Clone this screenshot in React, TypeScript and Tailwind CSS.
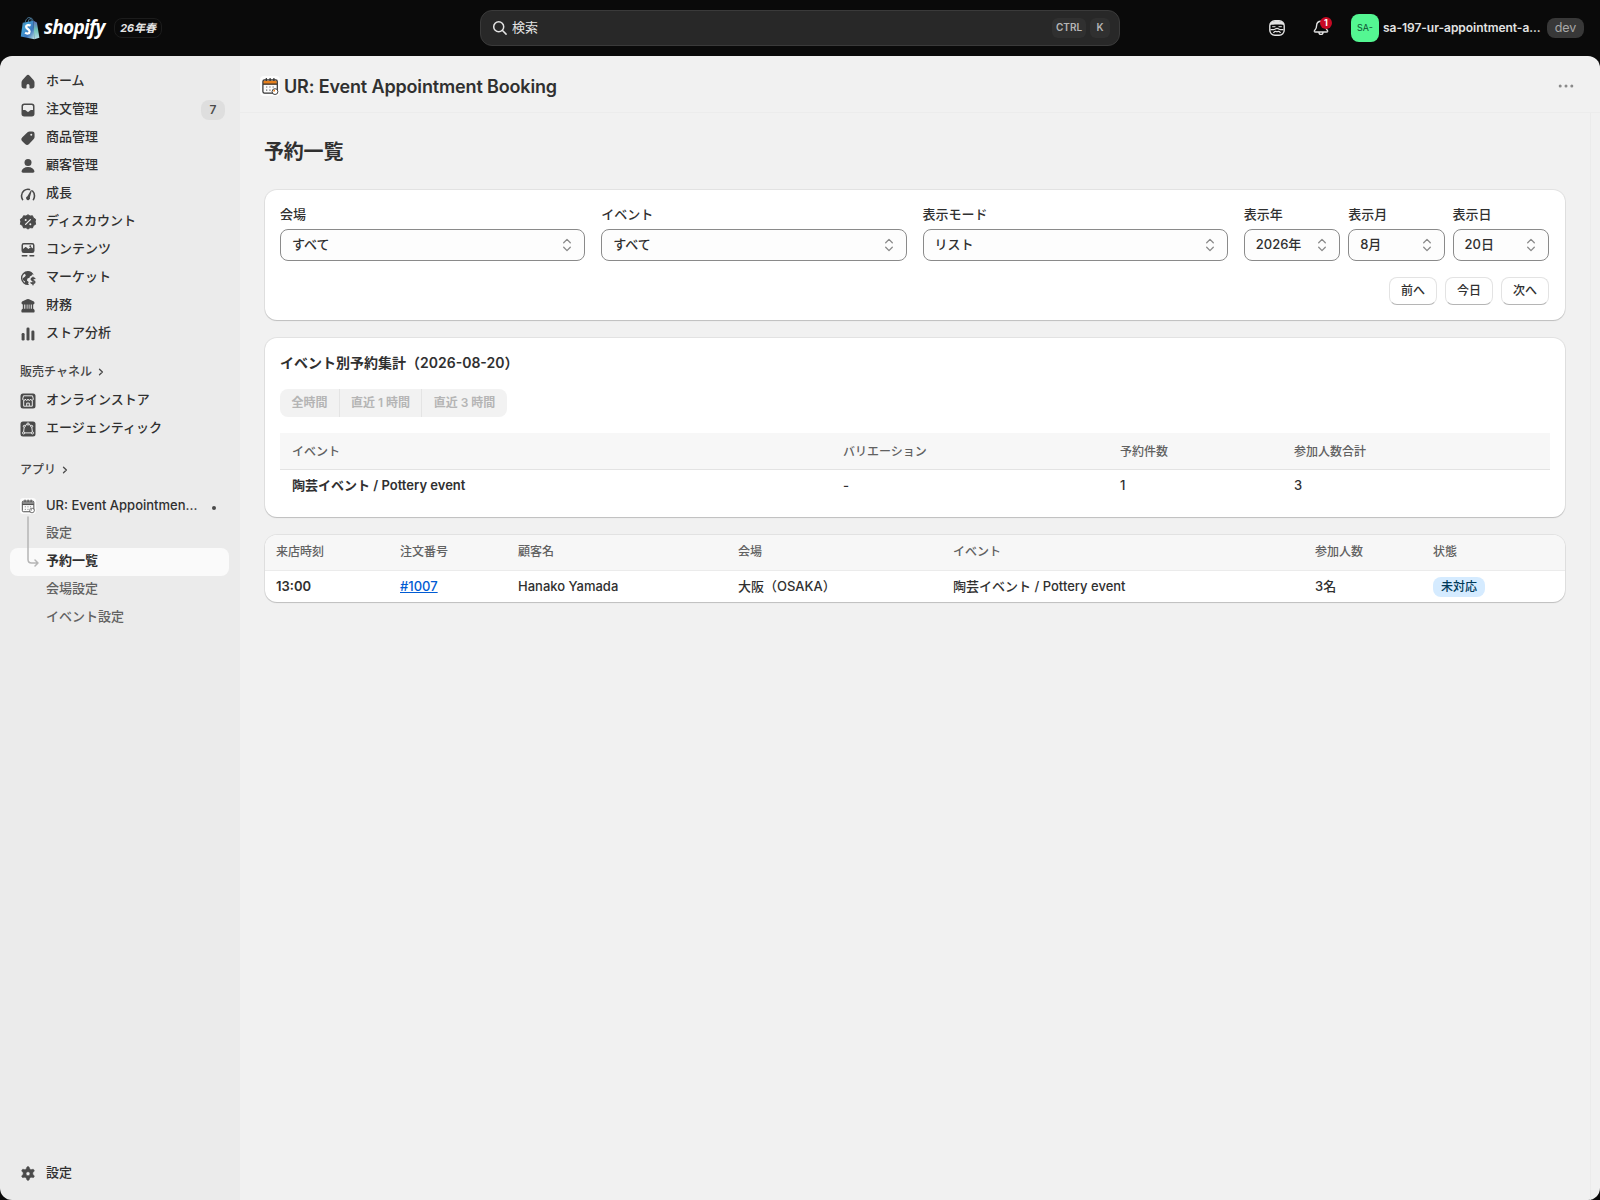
import React from "react";

const ICON = "block h-5 w-5 shrink-0 text-[#4a4a4a]";

function Svg({ children, className = ICON }: { children: React.ReactNode; className?: string }) {
  return (
    <svg viewBox="0 0 20 20" className={className} fill="currentColor">
      {children}
    </svg>
  );
}

const icons: Record<string, React.ReactNode> = {
  home: (
    <path d="M8.344 3.692a2.25 2.25 0 0 1 3.312 0l3.854 4.19a3.75 3.75 0 0 1 .99 2.538v3.33a2.75 2.75 0 0 1-2.75 2.75h-1.5a.75.75 0 0 1-.75-.75v-2.25a1.5 1.5 0 0 0-3 0v2.25a.75.75 0 0 1-.75.75h-1.5a2.75 2.75 0 0 1-2.75-2.75v-3.33c0-.94.353-1.846.99-2.539l3.854-4.189Z" />
  ),
  orders: (
    <path
      fillRule="evenodd"
      d="M6.25 3.5a2.75 2.75 0 0 0-2.75 2.75v7.5a2.75 2.75 0 0 0 2.75 2.75h7.5a2.75 2.75 0 0 0 2.75-2.75v-7.5a2.75 2.75 0 0 0-2.75-2.75h-7.5Zm-1.25 3c0-.83.67-1.5 1.5-1.5h7c.83 0 1.5.67 1.5 1.5v3.5h-1.9c-.54 0-1.06.23-1.42.64l-.7.78a.9.9 0 0 1-.66.28h-.64a.9.9 0 0 1-.66-.28l-.7-.78a1.9 1.9 0 0 0-1.42-.64h-1.9v-3.5Z"
    />
  ),
  tag: (
    <path
      fillRule="evenodd"
      d="M11.6 3.5a3 3 0 0 0-2.06.82l-5.2 4.94a2.75 2.75 0 0 0-.05 3.94l2.83 2.83a2.75 2.75 0 0 0 3.94-.05l4.7-4.95a3 3 0 0 0 .82-2.06v-3.22a2.25 2.25 0 0 0-2.25-2.25h-2.73Zm1.65 4.25a1 1 0 1 0 0-2 1 1 0 0 0 0 2Z"
    />
  ),
  person: (
    <>
      <circle cx="10" cy="6.5" r="3.5" />
      <path d="M3.6 15.1c.5-2.3 2.9-4 6.4-4s5.900 1.700 6.400 4c.2.900-.5 1.650-1.400 1.650h-10c-.900 0-1.600-.750-1.400-1.650Z" />
    </>
  ),
  growth: (
    <>
      <path d="M4.6 15.600a7 7 0 0 1-1.100-3.900 6.500 6.500 0 0 1 8-6.250M14.500 7a6.500 6.500 0 0 1 2 4.700c0 1.400-.4 2.800-1.100 3.900" fill="none" stroke="currentColor" strokeWidth="1.600" strokeLinecap="round" />
      <path d="m12.900 6.200-3.500 6a2 2 0 1 0 2.500 1.100l1.900-6.700c.200-.6-.6-.9-.9-.4Z" />
    </>
  ),
  discount: (
    <>
      <path d="M10 2.700l2 1.400 2.500-.3.900 2.300 2.200 1.200-.5 2.500.5 2.500-2.200 1.200-.9 2.400-2.500-.3-2 1.500-2-1.500-2.500.3-.9-2.400-2.200-1.200.5-2.500-.5-2.500 2.200-1.200.9-2.300 2.500.3Z" stroke="currentColor" strokeLinejoin="round" />
      <path d="m7.600 12.400 4.800-4.800" stroke="#ebebeb" strokeWidth="1.300" strokeLinecap="round" />
      <circle cx="7.700" cy="7.900" r="1" fill="#ebebeb" />
      <circle cx="12.300" cy="12.200" r="1" fill="#ebebeb" />
    </>
  ),
  content: (
    <>
      <path
        fillRule="evenodd"
        d="M5.750 3a2.250 2.250 0 0 0-2.250 2.250v5.500a2.250 2.250 0 0 0 2.250 2.250h8.500a2.250 2.250 0 0 0 2.250-2.250v-5.500a2.250 2.250 0 0 0-2.250-2.250h-8.500Zm-.75 2.500c0-.6.400-1 1-1h8c.6 0 1 .4 1 1v3l-1.200-.9c-.5-.4-1.100-.4-1.600 0l-1.700 1.500-2-1.700c-.5-.4-1.100-.4-1.600 0l-1.900 1.500v-2.400Z"
      />
      <circle cx="12.300" cy="6.200" r=".9" />
      <path d="M4.300 15.800h4.500M12 15.800h3.700" stroke="currentColor" strokeWidth="1.500" strokeLinecap="round" />
    </>
  ),
  markets: (
    <>
      <path fillRule="evenodd" d="M10 3a7 7 0 1 0 1 13.920l-.9-1.500.6-1.300-1.800-1.700.6-1.900 2-.8.400-1.200 1.800-1 .9-1.300 1.200.6a7 7 0 0 0-5.800-3.820Zm-3.700 2.700 1.600 1.200-.8 1.700-2.300 1.600.3 2 2 1.300-.2 1.200a5.600 5.600 0 0 1-.6-9Z" />
      <path d="M16.800 10.600c-.5-.7-3.500-1-3.600.7 0 1.800 3.700.9 3.700 2.800 0 1.700-3.100 1.600-3.900.6M15 9.200v7.500" fill="none" stroke="currentColor" strokeWidth="1.400" strokeLinecap="round" />
    </>
  ),
  finance: (
    <path d="M8.900 3.200a2.500 2.500 0 0 1 2.200 0l4.300 2.100c.7.300 1.100 1 1.100 1.700 0 .8-.6 1.400-1.300 1.500v4.200c.8.200 1.400.9 1.400 1.800v1c0 .6-.4 1-1 1H4.400c-.6 0-1-.4-1-1v-1c0-.9.600-1.600 1.400-1.800V8.500C4.100 8.400 3.500 7.800 3.500 7c0-.7.4-1.400 1.100-1.700l4.300-2.100ZM6.200 8.500v4.200h1.100V8.500Zm2.500 0v4.200h.8V8.500Zm2 0v4.200h.8V8.500Zm2.100 0v4.200h1V8.500Z" fillRule="evenodd" />
  ),
  analytics: (
    <>
      <rect x="3.600" y="9" width="3" height="7.500" rx="1.300" />
      <rect x="8.500" y="3.500" width="3" height="13" rx="1.300" />
      <rect x="13.400" y="6.500" width="3" height="10" rx="1.300" />
    </>
  ),
  gear: (
    <path
      fillRule="evenodd"
      stroke="currentColor"
      strokeWidth=".5"
      d="M8.700 3.400c.2-.5.700-.9 1.300-.9s1.100.4 1.300.9l.5 1.600 1.200.7 1.600-.4c.6-.1 1.200.1 1.500.6s.2 1.200-.2 1.600l-1.100 1.200v1.500l1.100 1.200c.4.400.5 1.100.2 1.600s-.9.700-1.500.6l-1.600-.4-1.200.7-.5 1.600c-.2.5-.7.900-1.300.9s-1.100-.4-1.300-.9l-.5-1.600-1.200-.7-1.600.4c-.6.1-1.200-.1-1.500-.6s-.2-1.200.2-1.600l1.100-1.200V8.700L4.100 7.500c-.4-.4-.5-1.100-.2-1.600s.9-.7 1.500-.6l1.600.4L8.200 5Zm1.300 8.300a1.950 1.950 0 1 0 0-3.900 1.950 1.950 0 0 0 0 3.900Z"
    />
  ),
};

const navItems = [
  { icon: "home", label: "ホーム" },
  { icon: "orders", label: "注文管理", count: "7" },
  { icon: "tag", label: "商品管理" },
  { icon: "person", label: "顧客管理" },
  { icon: "growth", label: "成長" },
  { icon: "discount", label: "ディスカウント" },
  { icon: "content", label: "コンテンツ" },
  { icon: "markets", label: "マーケット" },
  { icon: "finance", label: "財務" },
  { icon: "analytics", label: "ストア分析" },
];

function NavRow({ icon, label, count }: { icon: React.ReactNode; label: string; count?: string }) {
  return (
    <div className="flex h-7 items-center pl-2 pr-1">
      {icon}
      <span className="ml-2 flex-1 -translate-y-px whitespace-nowrap">{label}</span>
      {count && (
        <span className="flex h-5 w-6 items-center justify-center rounded-lg bg-[#dedede] text-xs font-semibold text-[#4a4a4a]">
          {count}
        </span>
      )}
    </div>
  );
}

function SectionTitle({ label }: { label: string }) {
  return (
    <div className="flex h-7 items-center pl-[10px] text-xs text-[#454545]">
      <span>{label}</span>
      <svg viewBox="0 0 8 8" className="ml-[5px] h-2 w-2" fill="none" stroke="#4a4a4a" strokeWidth="1.300" strokeLinecap="round" strokeLinejoin="round">
        <path d="M2.500 1.200 5.400 4 2.500 6.800" />
      </svg>
    </div>
  );
}

function CalendarIcon({ className, ink, band, dial }: { className: string; ink: string; band: string; dial: string }) {
  return (
    <svg viewBox="0 0 20 20" className={className}>
      <rect width="20" height="20" rx="4" fill="#fff" fillOpacity=".8" />
      <path d="M3.200 4.400h13.600v4H3.200Z" fill={band} />
      <rect x="2.900" y="3.800" width="14.400" height="13.400" rx="1.600" fill="none" stroke={ink} strokeWidth="1.200" />
      <path d="M3 8.200h14.200M6.300 2v3M10.100 2v3M13.900 2v3" stroke={ink} strokeWidth="1.200" />
      <path d="M6 11h1.300M9.300 11h1.300M12.500 11h1.300M6 14.200h1.300M9.300 14.200h1.300" stroke={ink} strokeWidth="1.200" opacity=".7" />
      <circle cx="15" cy="15.600" r="2.900" fill="#fff" stroke={ink} strokeWidth=".9" />
      <path d="M15 15.600v-2a2 2 0 0 0-1.900 2Z" fill={dial} />
    </svg>
  );
}

function TopBar() {
  return (
    <header className="flex h-14 items-center bg-[#0a0a0a] text-[#e3e3e3]">
      <div className="flex w-[480px] items-center pl-5">
        <svg viewBox="0 0 20 24" className="h-6 w-5">
          <defs>
            <linearGradient id="bag" x1="0" y1="0" x2="1" y2="1">
              <stop offset="0" stopColor="#4a6c94" />
              <stop offset=".3" stopColor="#43a0d4" />
              <stop offset=".65" stopColor="#3a74bd" />
              <stop offset="1" stopColor="#bfe8e6" />
            </linearGradient>
            <linearGradient id="side" x1="0" y1="0" x2="0" y2="1">
              <stop offset="0" stopColor="#5b6bb8" />
              <stop offset=".5" stopColor="#6fc3b8" />
              <stop offset="1" stopColor="#b9dfee" />
            </linearGradient>
          </defs>
          <path d="M5.200 6.500C5.800 3 8 1.200 9.600 1.600c1.400.4 1.700 2.300 1.700 3.900M8.200 6C8.800 3 10.500 1.500 11.700 2.300c.8.500 1.200 1.700 1.300 2.900" fill="none" stroke="#4e7fa3" strokeWidth="1" />
          <path d="M2.700 6.700 13.600 4.700 14.300 23.200.8 20.600Z" fill="url(#bag)" />
          <path d="m13.600 4.700 3.300 1.700 2.500 15.400-5.100 1.400Z" fill="url(#side)" />
          <path d="M10.600 9.600c-1.500-.9-4.500-.8-4.400 1.400.1 1.900 3.400 2.200 3.400 4.500 0 2.200-2.500 2.700-4.500 1.200" fill="none" stroke="#fff" strokeWidth="2.300" />
        </svg>
        <span className="ml-1 w-[70px] origin-left -translate-y-px font-['Open_Sans',sans-serif] text-[19px] font-bold italic leading-6 tracking-[-0.7px] text-white">shopify</span>
        <span className="flex h-5 w-12 items-center justify-center rounded-lg border border-[#1c1c1c] text-[11px] font-bold italic tracking-[-0.1px]">26年春</span>
      </div>
      <div className="flex h-9 w-[640px] items-center rounded-xl border border-[#3a3a3a] bg-[#282828] pl-[11px] pr-[9px]">
        <svg viewBox="0 0 16 16" className="h-4 w-4" fill="none" stroke="#e3e3e3" strokeWidth="1.500" strokeLinecap="round">
          <circle cx="6.700" cy="6.700" r="5" />
          <path d="m10.500 10.500 3.600 3.600" />
        </svg>
        <span className="ml-1 flex-1 text-[13px]">検索</span>
        <span className="flex h-5 w-[34px] items-center justify-center rounded-md bg-[#303030] pb-px text-[10px] font-semibold text-[#b5b5b5]">CTRL</span>
        <span className="ml-1 flex h-5 w-5 items-center justify-center rounded-md bg-[#303030] pb-px text-[10px] font-semibold text-[#b5b5b5]">K</span>
      </div>
      <div className="flex flex-1 items-center justify-end pr-4">
        <svg viewBox="0 0 16 16" className="h-4 w-4" fill="none" stroke="#e3e3e3">
          <rect x=".8" y=".8" width="14.400" height="14.400" rx="5" strokeWidth="1.400" />
          <path d="M1 5C1 2 3.500 1 8 1s7 1 7 4c-3-.8-11-.8-14 0Z" fill="#e3e3e3" stroke="none" />
          <path d="M1.500 9.700h3.100c1.400 0 1.900-1.400 3.400-1.400s2 1.400 3.400 1.400h3.100" strokeWidth="1.300" />
          <path d="M3.200 6.700h3.300M9.500 6.700h3.300" strokeWidth="1" />
          <path d="M4.500 13c.8-1.700 2-1.900 3.500-1.200 1.500-.7 2.700-.5 3.500 1.200" strokeWidth="1.200" />
        </svg>
        <div className="relative ml-[26px] h-5 w-5">
          <svg viewBox="0 0 20 20" className="h-5 w-5" fill="none" stroke="#e3e3e3" strokeWidth="1.400" strokeLinecap="round" strokeLinejoin="round">
            <path d="M10 3.200c-2.700 0-4.300 2-4.400 4.300-.1 2.200-.4 3-1.300 3.900-.8.800-1.200 1.200-1 1.900.2.600.7.700 1.300.7h10.800c.6 0 1.100-.1 1.300-.7.200-.7-.2-1.100-1-1.900-.9-.9-1.200-1.700-1.300-3.900C14.300 5.200 12.700 3.200 10 3.200ZM7.900 14.200c.1 1.300.9 2.200 2.100 2.200s2-.9 2.100-2.200" />
          </svg>
          <span className="absolute left-[9px] top-[-1px] flex h-3 w-3 items-center justify-center rounded-full bg-[#c70a24] text-[9px] font-bold text-white">1</span>
        </div>
        <span className="ml-5 flex h-7 w-7 items-center justify-center rounded-lg bg-[#54f792] text-[9px] font-normal text-[#0f5132]">SA-</span>
        <span className="ml-1 w-[157px] whitespace-nowrap text-xs font-semibold tracking-[-0.03px]">sa-197-ur-appointment-a...</span>
        <span className="ml-[7px] flex h-5 w-[37px] items-center justify-center rounded-lg bg-[#383838] text-[12.5px] font-normal text-[#a8a8a8]">dev</span>
      </div>
    </header>
  );
}

function Sidebar() {
  return (
    <nav className="flex w-60 shrink-0 flex-col bg-[#ebebeb] pb-3 pl-[10px] pr-[11px] pt-3 text-[13px] font-medium text-[#303030]">
      {navItems.map((n) => (
        <NavRow key={n.label} icon={<Svg>{icons[n.icon]}</Svg>} label={n.label} count={n.count} />
      ))}
      <div className="mt-[10px]">
        <div className="mb-px">
          <SectionTitle label="販売チャネル" />
        </div>
        <NavRow
          label="オンラインストア"
          icon={
            <Svg>
              <rect x="2.500" y="2.500" width="15" height="15" rx="2.500" />
              <path d="M5.500 4.800h9l.8 3.200c0 1.900-2.600 1.900-2.700 0 0 1.900-2.600 1.900-2.600 0 0 1.900-2.600 1.900-2.600 0-.1 1.900-2.700 1.900-2.700 0Zm.2 4.900v5.500h8.600V9.700M8.700 15v-2.900h2.600V15" fill="none" stroke="#ebebeb" strokeWidth="1" />
            </Svg>
          }
        />
        <NavRow
          label="エージェンティック"
          icon={
            <Svg>
              <rect x="2.500" y="2.500" width="15" height="15" rx="2.500" />
              <g fill="none" stroke="#ebebeb" strokeWidth="1">
                <path d="M9 5.400 6.900 6.700M11 5.400l2.100 1.300M6.200 8.300l-.6 4.500M13.800 8.300l.6 4.500M6.700 13.900h6.600" />
                <circle cx="10" cy="5" r="1.100" />
                <circle cx="6.300" cy="7.300" r="1" />
                <circle cx="13.700" cy="7.300" r="1" />
                <circle cx="5.600" cy="13.900" r="1.100" />
                <circle cx="14.400" cy="13.900" r="1.100" />
              </g>
            </Svg>
          }
        />
      </div>
      <div className="mt-[13px]">
        <SectionTitle label="アプリ" />
      </div>
      <div className="relative mt-2">
        <div className="flex h-7 items-center pl-[10px] pr-[13px]">
          <CalendarIcon className="h-4 w-4" ink="#4a4a4a" band="#8a8a8a" dial="#8a8a8a" />
          <span className="ml-[10px] flex-1 whitespace-nowrap">UR: Event Appointmen...</span>
          <span className="mt-1 h-1 w-1 rounded-full bg-[#4a4a4a]" />
        </div>
        <div className="flex h-7 items-center pb-0.5 pl-9 text-[#616161]">設定</div>
        <div className="flex h-7 items-center rounded-lg bg-[#fafafa] pb-0.5 pl-9 font-semibold">予約一覧</div>
        <div className="flex h-7 items-center pb-0.5 pl-9 text-[#616161]">会場設定</div>
        <div className="flex h-7 items-center pb-0.5 pl-9 text-[#616161]">イベント設定</div>
        <svg viewBox="0 0 14 54" className="absolute left-4 top-[24px] h-[54px] w-[14px]" fill="none" stroke="#b5b5b5" strokeWidth="1.500" strokeLinecap="round" strokeLinejoin="round">
          <path d="M2 1v42.500c0 2.500 1 3.500 3.500 3.500h6.500M9 44l3 3-3 3" />
        </svg>
      </div>
      <div className="mt-auto">
        <NavRow icon={<Svg>{icons.gear}</Svg>} label="設定" />
      </div>
    </nav>
  );
}

function Select({ label, value }: { label: string; value: string }) {
  return (
    <div className="min-w-0 flex-1">
      <div className="mb-[5px] h-5 text-[13px] leading-5">{label}</div>
      <div className="flex h-8 items-center justify-between rounded-lg border border-[#8a8a8a] bg-[#fdfdfd] pl-[11px] pr-3">
        <span>{value}</span>
        <svg viewBox="0 0 10 14" className="h-[14px] w-[10px]" fill="none" stroke="#8a8a8a" strokeWidth="1.300" strokeLinecap="round" strokeLinejoin="round">
          <path d="M1.700 4.700 5 1.400l3.300 3.300M1.700 9.300 5 12.600l3.300-3.300" />
        </svg>
      </div>
    </div>
  );
}

const CARD = "overflow-hidden rounded-xl bg-white shadow-[0_1px_1px_rgba(0,0,0,0.16),0_0_0_1px_rgba(0,0,0,0.06)]";

function Main() {
  return (
    <main className="flex min-w-0 flex-1 flex-col bg-[#f1f1f1] text-[13px] font-medium text-[#303030]">
      <div className="flex h-[57px] items-center border-b border-[#ececec] pl-5 pr-[26px] pt-1">
        <CalendarIcon className="h-5 w-5" ink="#303030" band="#e8801c" dial="#e8801c" />
        <h1 className="ml-1 flex-1 pt-0.5 text-lg font-semibold tracking-[-0.15px]">UR: Event Appointment Booking</h1>
        <svg viewBox="0 0 16 4" className="h-1 w-4" fill="#8a8a8a">
          <circle cx="2.200" cy="2" r="1.500" />
          <circle cx="8" cy="2" r="1.500" />
          <circle cx="13.800" cy="2" r="1.500" />
        </svg>
      </div>
      <div className="mr-[9px] flex-1 border-r border-[#ebebeb] pl-[25px] pr-[25px] pt-[23px]">
        <h2 className="-ml-px h-8 text-xl font-semibold leading-8 tracking-[-0.2px]">予約一覧</h2>
        <section className={`${CARD} mt-[22px] h-[130px] pl-[15px] pr-4 pt-[14px]`}>
          <div className="grid grid-cols-4 gap-4">
            <Select label="会場" value="すべて" />
            <Select label="イベント" value="すべて" />
            <Select label="表示モード" value="リスト" />
            <div className="flex gap-2">
              <Select label="表示年" value="2026年" />
              <Select label="表示月" value="8月" />
              <Select label="表示日" value="20日" />
            </div>
          </div>
          <div className="mt-4 flex justify-end gap-2 text-xs">
            {["前へ", "今日", "次へ"].map((b) => (
              <button key={b} className="h-7 w-12 rounded-lg border border-[#e3e3e3] border-b-[#b5b5b5] bg-white">
                {b}
              </button>
            ))}
          </div>
        </section>
        <section className={`${CARD} mt-[18px] h-[179px] px-[15px] pt-[15px]`}>
          <h3 className="h-5 text-sm font-semibold leading-5">イベント別予約集計（2026-08-20）</h3>
          <div className="mt-4 flex h-7 w-[227px] divide-x divide-[#e4e4e4] overflow-hidden rounded-lg bg-[#f2f2f2] text-xs font-semibold text-[#b5b5b5]">
            <span className="flex w-[60px] items-center justify-center">全時間</span>
            <span className="flex w-[82px] items-center justify-center">直近 1 時間</span>
            <span className="flex flex-1 items-center justify-center">直近 3 時間</span>
          </div>
          <div className="mt-4">
            <div className="grid h-[37px] grid-cols-[551px_277px_174px_1fr] items-center border-b border-[#e3e3e3] bg-[#f7f7f7] pl-3 pt-px text-xs text-[#616161]">
              <span>イベント</span>
              <span>バリエーション</span>
              <span>予約件数</span>
              <span>参加人数合計</span>
            </div>
            <div className="grid h-8 grid-cols-[551px_277px_174px_1fr] items-center pl-3">
              <span className="font-semibold">陶芸イベント / Pottery event</span>
              <span>-</span>
              <span>1</span>
              <span>3</span>
            </div>
          </div>
        </section>
        <section className={`${CARD} mt-[18px] h-[67px]`}>
          <div className="grid h-9 grid-cols-[124px_118px_220px_215px_362px_118px_1fr] items-center border-b border-[#ebebeb] bg-[#f7f7f7] pb-px pl-[11px] text-xs text-[#616161]">
            <span>来店時刻</span>
            <span>注文番号</span>
            <span>顧客名</span>
            <span>会場</span>
            <span>イベント</span>
            <span>参加人数</span>
            <span>状態</span>
          </div>
          <div className="grid h-8 grid-cols-[124px_118px_220px_215px_362px_118px_1fr] items-center pl-[11px]">
            <span className="font-semibold">13:00</span>
            <span className="text-[#005bd3] underline">#1007</span>
            <span>Hanako Yamada</span>
            <span>大阪（OSAKA）</span>
            <span>陶芸イベント / Pottery event</span>
            <span>3名</span>
            <span className="flex h-5 w-[52px] items-center justify-center rounded-lg bg-[#d5ebff] text-xs text-[#003a5a]">未対応</span>
          </div>
        </section>
      </div>
    </main>
  );
}

export default function App() {
  return (
    <div lang="ja" className="flex h-[1200px] w-[1600px] flex-col overflow-hidden bg-[#0a0a0a] font-[Inter,'Noto_Sans_CJK_JP',sans-serif]">
      <TopBar />
      <div className="flex min-h-0 flex-1 overflow-hidden rounded-xl">
        <Sidebar />
        <Main />
      </div>
    </div>
  );
}
